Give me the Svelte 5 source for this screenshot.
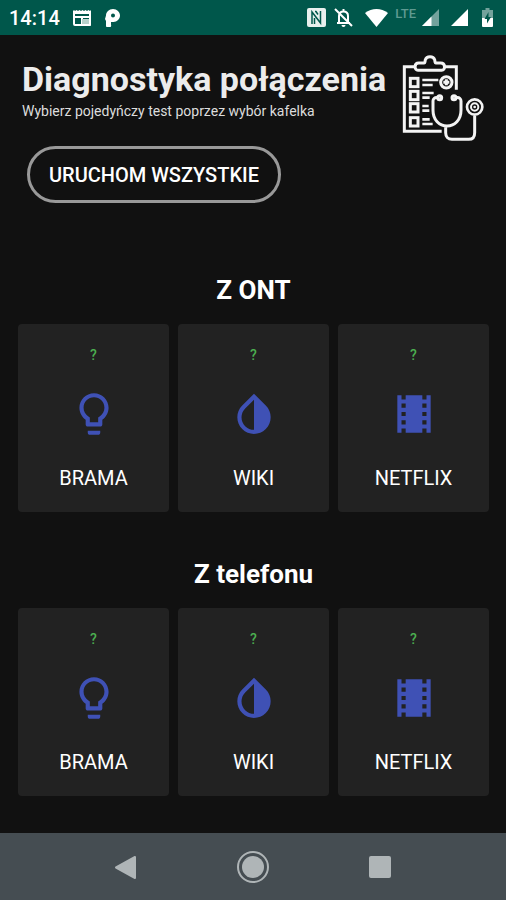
<script>
	const tests = [
		{ name: 'BRAMA', icon: 'bulb' },
		{ name: 'WIKI', icon: 'drop' },
		{ name: 'NETFLIX', icon: 'film' }
	];

	const icons = {
		bulb: 'M9 21c0 .55.45 1 1 1h4c.55 0 1-.45 1-1v-1H9v1zm3-19C8.14 2 5 5.14 5 9c0 2.38 1.19 4.47 3 5.74V17c0 .55.45 1 1 1h6c.55 0 1-.45 1-1v-2.26c1.81-1.27 3-3.36 3-5.74 0-3.86-3.14-7-7-7zm2.85 11.1l-.85.6V16h-4v-2.3l-.85-.6C7.8 12.16 7 10.63 7 9c0-2.76 2.24-5 5-5s5 2.24 5 5c0 1.63-.8 3.16-2.15 4.1z',
		drop: 'M17.66 7.93L12 2.27 6.34 7.93c-3.12 3.12-3.12 8.19 0 11.31C7.9 20.8 9.95 21.58 12 21.58c2.05 0 4.1-.78 5.66-2.34 3.12-3.12 3.12-8.19 0-11.31zM12 19.59c-1.6 0-3.11-.62-4.24-1.76C6.62 16.69 6 15.19 6 13.59s.62-3.11 1.76-4.24L12 5.1v14.49z',
		film: 'M18 3v2h-2V3H8v2H6V3H4v18h2v-2h2v2h8v-2h2v2h2V3h-2zM8 17H6v-2h2v2zm0-4H6v-2h2v2zm0-4H6V7h2v2zm10 8h-2v-2h2v2zm0-4h-2v-2h2v2zm0-4h-2V7h2v2z'
	};

	const groups = $state([
		{ title: 'Z ONT', results: ['?', '?', '?'] },
		{ title: 'Z telefonu', results: ['?', '?', '?'] }
	]);
</script>

<div class="screen">
	<div class="status-bar">
		<div class="status-left">
			<span class="clock">14:14</span>
			<svg class="news" width="18" height="18" viewBox="0 0 18 18">
				<path fill="#fff" fill-rule="evenodd" d="M0 2l1-1 1 1 1.5-1 1.5 1 1.5-1 1.5 1 1.5-1 1.5 1 1.5-1 1.5 1 1.5-1 1.5 1 1-1 .5 1v13a2 2 0 0 1-2 2H2a2 2 0 0 1-2-2zM2 5v2h14V5zM2 9v6h6V9zM10 9v1h6V9z" />
				<path fill="#b8d2cc" d="M9 10h7v5H9z" />
			</svg>
			<svg class="parking" width="15" height="18" viewBox="0 0 15 18">
				<path fill="#fff" fill-rule="evenodd" d="M1 6.5C1 3 4 0 8 0s7 3 7 6.500S12 13 8.500 13H6v2.500A2.500 2.500 0 0 1 1 17V12L0 10zM8 4.500a2 2 0 1 0 0 4 2 2 0 0 0 0-4z" />
			</svg>
		</div>
		<div class="status-right">
			<svg width="19" height="19" viewBox="0 0 19 19">
				<rect width="19" height="19" rx="2" fill="#e8f0ee" />
				<path fill="none" stroke="#00574b" stroke-width="1.5" d="M5 16V4l8.500 11V3M8 3.500h1l2 3M7.500 10v6" />
			</svg>
			<svg class="bell" width="19" height="19" viewBox="0 0 19 19">
				<path fill="none" stroke="#fff" stroke-width="2" d="M3 15h13M5 14V8c0-3 2-4.500 4.500-4.500S14 5 14 8v6M9.500 1v3M1 1l17 17" />
				<path fill="#fff" d="M7.500 17h4a2 2 0 0 1-4 0z" />
			</svg>
			<svg class="wifi" width="23" height="18" viewBox="0 0 23 18">
				<path fill="#fff" d="M0 4C7-1.300 16-1.300 23 4L11.500 18z" />
			</svg>
			<span class="lte">LTE</span>
			<svg class="signal" width="17" height="17" viewBox="0 0 17 17">
				<path fill="#fff" opacity=".45" d="M17 0v17H0z" />
				<path fill="#fff" d="M9.500 7.500V17H0z" />
			</svg>
			<svg class="signal" width="17" height="17" viewBox="0 0 17 17">
				<path fill="#fff" d="M17 0v17H0z" />
			</svg>
			<svg class="battery" width="11" height="19" viewBox="0 0 11 19">
				<path fill="#fff" opacity=".45" d="M3.500 0h4v2H11v8H0V2h3.500z" />
				<path fill="#fff" d="M0 10h11v8a1 1 0 0 1-1 1H1a1 1 0 0 1-1-1z" />
				<path fill="#00574b" d="M6.500 4L2.500 11h2.500v4.500L9 9H6.500z" />
			</svg>
		</div>
	</div>

	<main>
		<header>
			<div class="intro">
				<h1>Diagnostyka połączenia</h1>
				<p>Wybierz pojedyńczy test poprzez wybór kafelka</p>
				<button class="run-all">URUCHOM WSZYSTKIE</button>
			</div>
			<svg class="clipboard" width="83" height="88" viewBox="36 26 249 264" fill="none" stroke="#f4f4f4" stroke-width="9">
				<path d="M78 64H43v194h112M165 64h34v69" />
				<path d="M84 75h71c12 0 12-22-3-22h-14c-4 0-3-7-4-10-4-12-24-12-28 0-1 3 0 10-4 10H86c-14 0-14 22-2 22z" />
				{#each [112, 151, 188, 230] as y}
					<rect x="61" y={y - 13} width="23" height="25" />
				{/each}
				<path stroke-width="8" d="M97 104h48M97 119h31M97 143h34M97 157h22M97 182h19M97 196h21M97 222h22M97 236h31" />
				<circle cx="169" cy="111" r="17" />
				<path d="M160 111h18M169 102v18" />
				<circle cx="149" cy="157" r="6" fill="#999" />
				<circle cx="192" cy="157" r="6" fill="#999" />
				<path d="M142 157c-8-1-13 3-13 10v28c0 29 19 47 42 47s42-18 42-47v-28c0-7-5-11-13-10M167 244v18c0 12 7 20 19 20h50c12 0 18-8 18-20v-51" />
				<circle cx="254" cy="185" r="23" stroke-width="8" />
				<circle cx="254" cy="185" r="11" stroke-width="6" />
				<circle cx="254" cy="185" r="2" stroke-width="4" />
			</svg>
		</header>

		{#each groups as group}
			<section>
				<h2>{group.title}</h2>
				<div class="tiles">
					{#each tests as test, i}
						<button class="tile">
							<span class="result">{group.results[i]}</span>
							<svg width="50" height="50" viewBox="0 0 24 24">
								<path d={icons[test.icon]} />
							</svg>
							<span class="name">{test.name}</span>
						</button>
					{/each}
				</div>
			</section>
		{/each}
	</main>

	<nav>
		<button aria-label="Wstecz">
			<svg width="34" height="34" viewBox="0 0 34 34">
				<path fill="#afb5b7" stroke="#afb5b7" stroke-width="2" stroke-linejoin="round" d="M26 7v21L7 17.500z" />
			</svg>
		</button>
		<button aria-label="Ekran główny">
			<svg width="34" height="34" viewBox="0 0 34 34">
				<circle cx="17" cy="17" r="15" fill="none" stroke="#afb5b7" stroke-width="2" />
				<circle cx="17" cy="17" r="11" fill="#afb5b7" />
			</svg>
		</button>
		<button aria-label="Ostatnie">
			<svg width="34" height="34" viewBox="0 0 34 34">
				<rect x="6" y="6" width="22" height="22" rx="2" fill="#afb5b7" />
			</svg>
		</button>
	</nav>
</div>

<style>
	:global(body) {
		margin: 0;
		background: #111;
	}

	.screen {
		display: flex;
		flex-direction: column;
		min-height: 100vh;
		background: #111;
		color: #fff;
		font-family: Roboto, 'Liberation Sans', sans-serif;
	}

	svg {
		display: block;
		flex-shrink: 0;
	}

	button {
		margin: 0;
		color: inherit;
		font-family: inherit;
		cursor: pointer;
	}

	.status-bar {
		display: flex;
		align-items: center;
		justify-content: space-between;
		height: 35px;
		padding: 0 13px 0 9px;
		background: #00574b;
	}

	.status-left,
	.status-right {
		display: flex;
		align-items: center;
	}

	.clock {
		font-size: 20px;
		font-weight: 500;
	}

	.news {
		margin-left: 13px;
	}

	.parking {
		margin-left: 14px;
	}

	.bell {
		margin-left: 8px;
	}

	.wifi {
		margin-left: 12px;
	}

	.lte {
		align-self: flex-start;
		margin-left: 7px;
		color: #5f9a91;
		font-size: 13px;
		font-weight: 500;
		line-height: 12px;
	}

	.signal {
		margin-left: 6px;
	}

	.signal + .signal {
		margin-left: 12px;
	}

	.battery {
		margin-left: 14px;
	}

	main {
		flex: 1;
		padding: 19px 17px 35px 18px;
	}

	header {
		display: flex;
		align-items: flex-start;
		justify-content: space-between;
		padding: 0 4px;
	}

	h1 {
		margin: 3px 0 0;
		color: #ececec;
		font-size: 34px;
		font-weight: 700;
		line-height: 44px;
		white-space: nowrap;
	}

	p {
		margin: 0;
		color: #ddd;
		font-size: 14px;
		line-height: 20px;
	}

	.run-all {
		height: 57px;
		margin: 25px 0 0 5px;
		padding: 0 19px;
		background: transparent;
		border: 3px solid #999;
		border-radius: 29px;
		font-size: 20px;
		font-weight: 500;
	}

	section {
		margin-top: 71px;
	}

	section + section {
		margin-top: 46px;
	}

	h2 {
		margin: 0 0 18px;
		font-size: 26px;
		font-weight: 700;
		line-height: 32px;
		text-align: center;
	}

	.tiles {
		display: grid;
		grid-template-columns: repeat(3, 1fr);
		gap: 9px;
	}

	.tile {
		display: flex;
		flex-direction: column;
		align-items: center;
		padding: 21px 0;
		background: #222;
		border: none;
		border-radius: 4px;
	}

	.tile svg {
		margin: 24px 0 26px;
		fill: #3f51b5;
	}

	.result {
		color: #4caf50;
		font-size: 14px;
		font-weight: 500;
		line-height: 20px;
	}

	.name {
		font-size: 20px;
		line-height: 26px;
	}

	nav {
		display: flex;
		justify-content: center;
		gap: 93px;
		padding: 17px 0 16px;
		background: #454d52;
	}

	nav button {
		padding: 0;
		background: none;
		border: none;
	}
</style>
